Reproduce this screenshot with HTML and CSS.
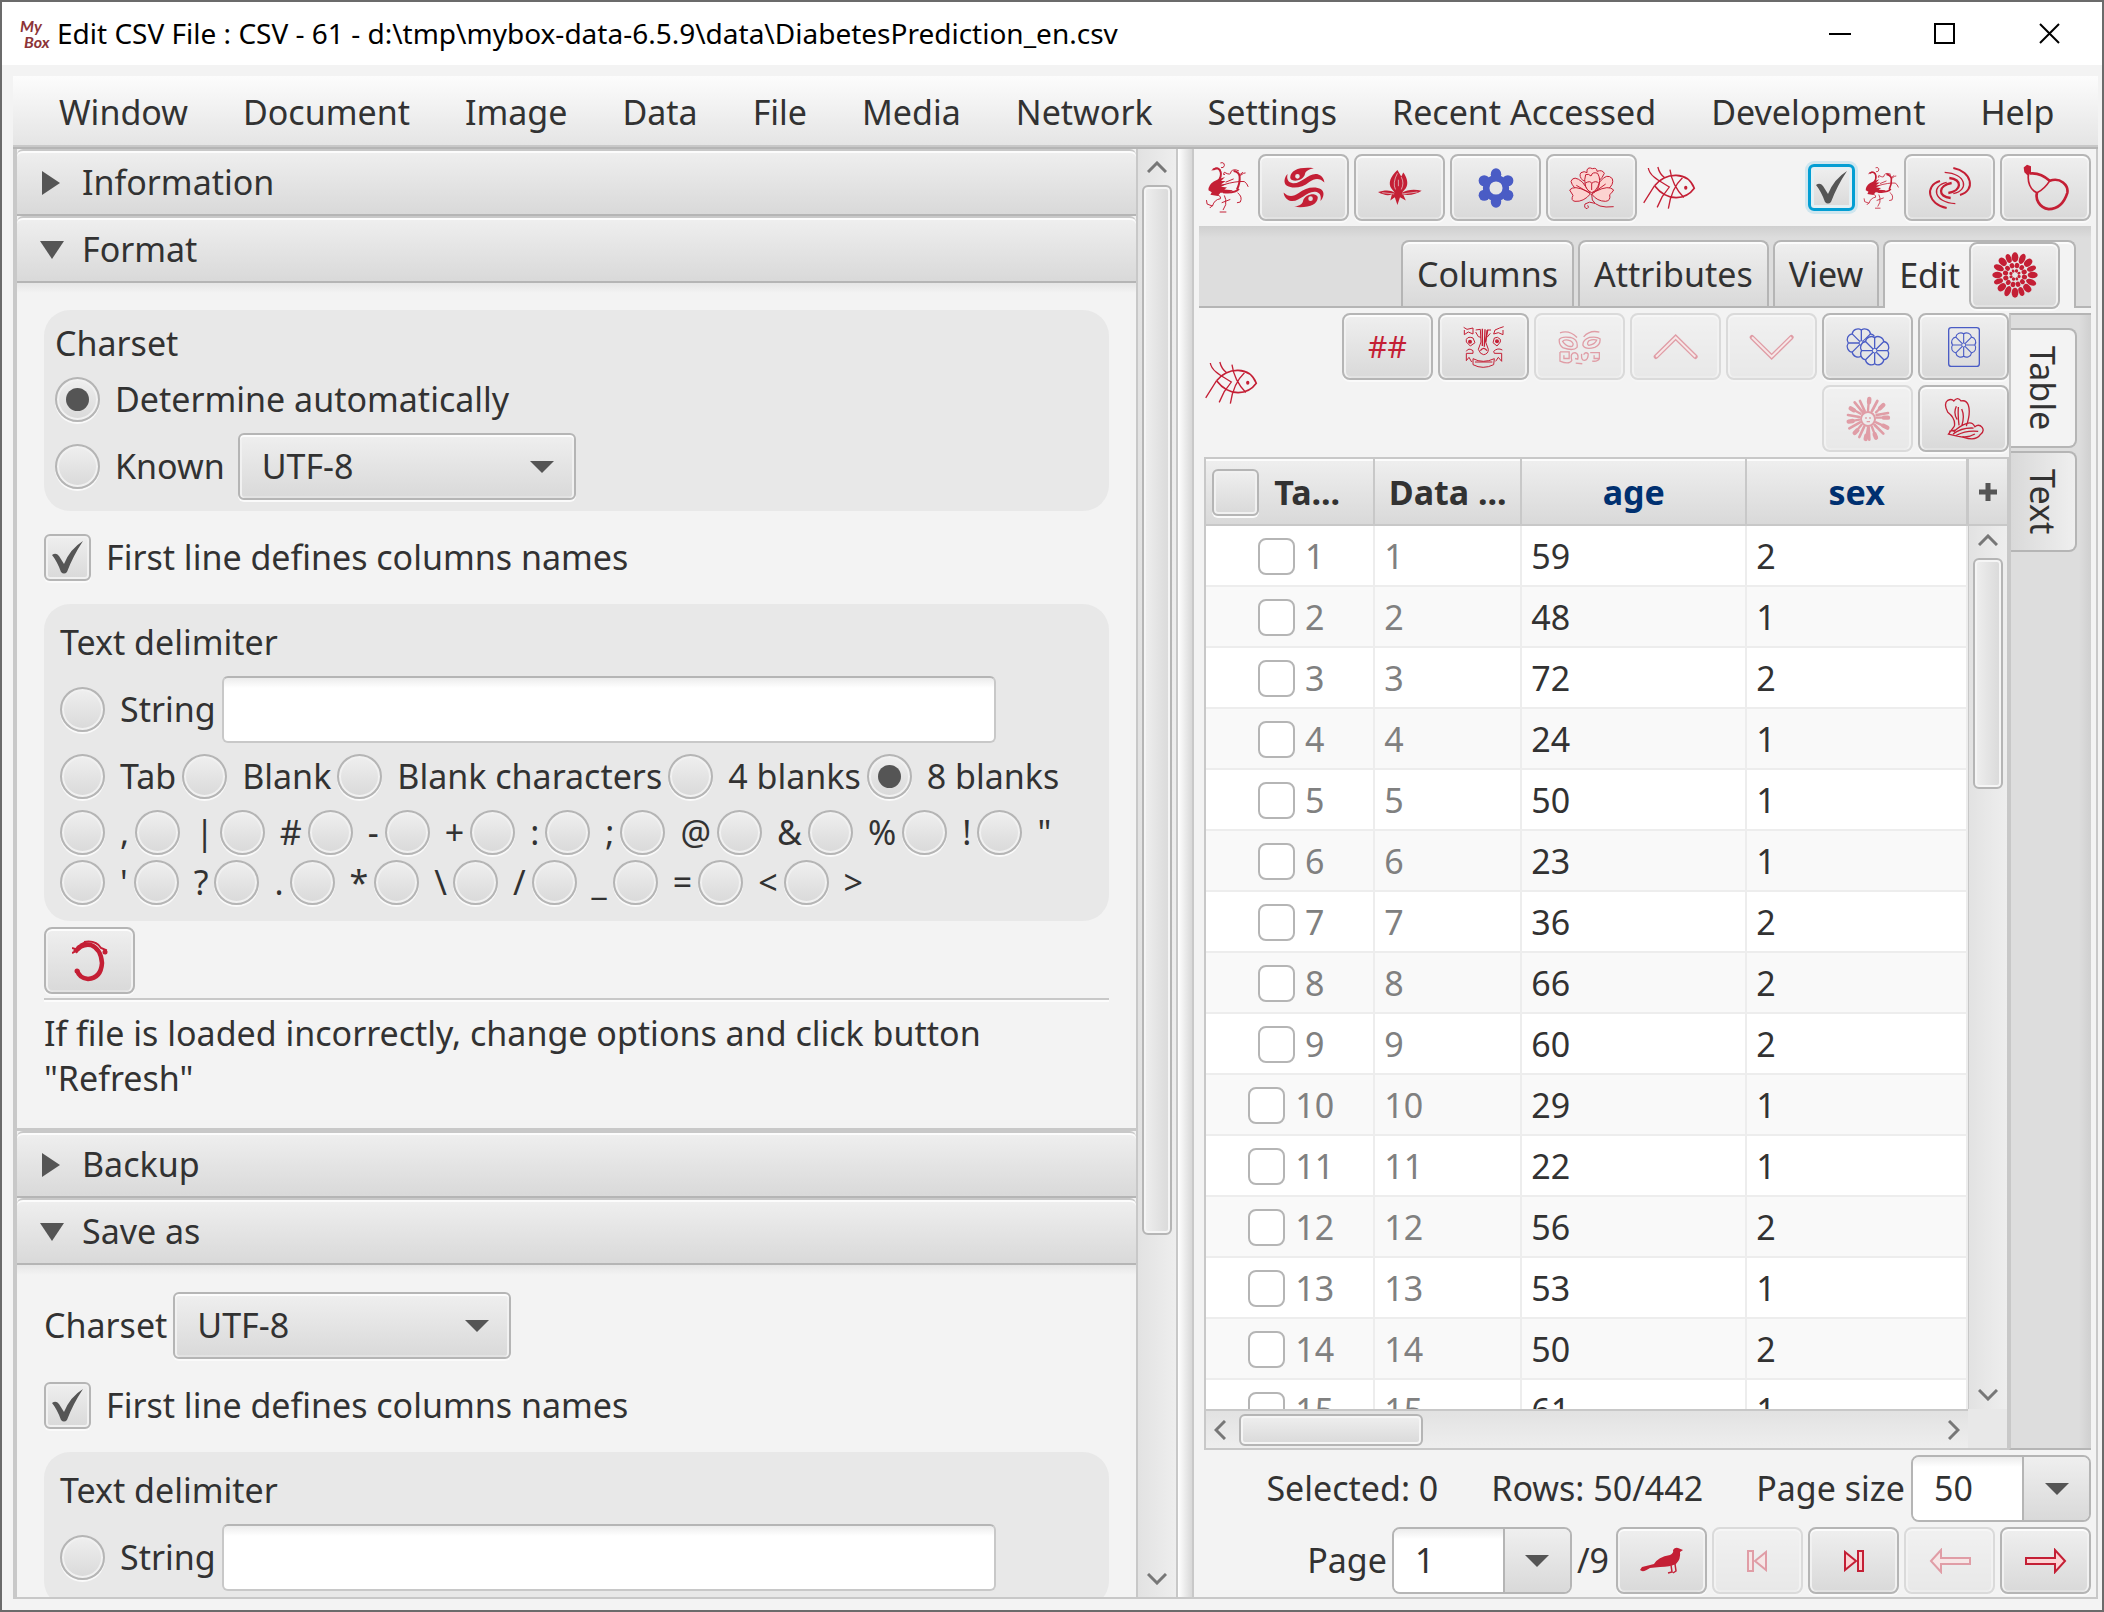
FILE: index.html
```
<!DOCTYPE html>
<html lang="en">
<head>
<meta charset="utf-8">
<title>Edit CSV File</title>
<link rel="stylesheet" href="styles.css">
</head>
<body>
<svg class="defs" aria-hidden="true">
  <symbol id="bird" viewBox="46 64 132 160">
    <g fill="none" stroke="currentColor" stroke-width="3">
      <path d="M66 92L78 85Q92 84 93 96M92 70Q104 66 104 78Q102 86 94 84M106 104Q98 108 104 98Q124 110 124 96Q132 86 148 94M150 106L160 98M152 108Q164 98 168 100M100 136Q140 124 164 126Q172 130 176 142M144 160Q160 172 152 188L142 190M84 166Q96 172 92 178Q74 180 68 200L52 194L50 182M68 198L60 206M104 168L108 180Q112 196 100 212M90 218H110M96 190L122 180M108 128L132 118"/>
      <path stroke-width="6" d="M70 90Q88 80 93 98Q96 110 86 124M100 158Q136 162 148 148M132 94Q148 96 150 110Q152 130 142 150"/>
    </g>
    <path fill="currentColor" d="M84 120L106 112L94 124L108 124L94 134L110 134L94 142L112 144L104 150L130 152Q120 160 92 160L84 170L62 166L66 158L56 152Q56 136 72 126Z"/>
  </symbol>
  <symbol id="fish" viewBox="1358 82 162 134">
    <g fill="none" stroke="currentColor" stroke-width="4">
      <path stroke-width="5" d="M1395 142C1430 100 1496 98 1516 150C1490 186 1434 192 1395 142"/>
      <path d="M1362 194L1395 142M1376 88C1380 116 1420 132 1440 146L1418 176L1403 208M1405 85Q1410 106 1426 118M1442 93Q1448 140 1484 178M1480 118Q1446 150 1437 212"/>
    </g>
    <ellipse cx="1490" cy="148" rx="5" ry="6" fill="currentColor"/>
  </symbol>
  <symbol id="flower8" viewBox="-50 -50 100 100">
    <g fill="none" stroke="currentColor" stroke-width="4">
      <path d="M40 0A18 18 0 0 1 28 28A18 18 0 0 1 0 40A18 18 0 0 1 -28 28A18 18 0 0 1 -40 0A18 18 0 0 1 -28 -28A18 18 0 0 1 0 -40A18 18 0 0 1 28 -28A18 18 0 0 1 40 0Z"/>
      <path d="M0 -40V40M-40 0H40M-28 -28L28 28M28 -28L-28 28"/>
    </g>
    <circle r="7" fill="#e8e8e8" stroke="currentColor" stroke-width="3"/>
  </symbol>
</svg>

<div class="window">
  <header class="titlebar">
    <span class="logo"><i>My</i><i>Box</i></span>
    <h1>Edit CSV File : CSV - 61 - d:\tmp\mybox-data-6.5.9\data\DiabetesPrediction_en.csv</h1>
    <div class="caption">
      <button aria-label="Minimize"><svg width="22" height="22"><path d="M0 11H22" /></svg></button>
      <button aria-label="Maximize"><svg width="22" height="22"><path d="M1 1H20V20H1Z"/></svg></button>
      <button aria-label="Close"><svg width="22" height="22"><path d="M1 1L20 20M20 1L1 20"/></svg></button>
    </div>
  </header>

  <nav class="menubar">
    <button>Window</button><button>Document</button><button>Image</button><button>Data</button><button>File</button><button>Media</button><button>Network</button><button>Settings</button><button>Recent Accessed</button><button>Development</button><button>Help</button>
  </nav>

  <main class="split">
    <section class="options">
      <div class="accordion">
        <button class="acc-head"><span class="tri closed"></span>Information</button>
        <button class="acc-head"><span class="tri open"></span>Format</button>
        <div class="acc-body">
          <fieldset class="group charset">
            <legend>Charset</legend>
            <div class="row"><label class="opt"><input type="radio" name="charset" checked>Determine automatically</label></div>
            <div class="row known">
              <label class="opt"><input type="radio" name="charset">Known</label>
              <span class="combo"><select aria-label="Charset"><option>UTF-8</option></select></span>
            </div>
          </fieldset>
          <label class="opt check"><input type="checkbox" checked>First line defines columns names</label>
          <fieldset class="group delim">
            <legend>Text delimiter</legend>
            <div class="row"><label class="opt"><input type="radio" name="delim">String</label><input class="text" type="text" aria-label="Delimiter string"></div>
            <div class="row"><label class="opt"><input type="radio" name="delim">Tab</label><label class="opt"><input type="radio" name="delim">Blank</label><label class="opt"><input type="radio" name="delim">Blank characters</label><label class="opt"><input type="radio" name="delim">4 blanks</label><label class="opt"><input type="radio" name="delim" checked>8 blanks</label></div>
            <div class="signs">
              <div class="row"><label class="opt"><input type="radio" name="delim">,</label><label class="opt"><input type="radio" name="delim">|</label><label class="opt"><input type="radio" name="delim">#</label><label class="opt"><input type="radio" name="delim">-</label><label class="opt"><input type="radio" name="delim">+</label><label class="opt"><input type="radio" name="delim">:</label><label class="opt"><input type="radio" name="delim">;</label><label class="opt"><input type="radio" name="delim">@</label><label class="opt"><input type="radio" name="delim">&amp;</label><label class="opt"><input type="radio" name="delim">%</label><label class="opt"><input type="radio" name="delim">!</label><label class="opt"><input type="radio" name="delim">"</label></div>
              <div class="row"><label class="opt"><input type="radio" name="delim">'</label><label class="opt"><input type="radio" name="delim">?</label><label class="opt"><input type="radio" name="delim">.</label><label class="opt"><input type="radio" name="delim">*</label><label class="opt"><input type="radio" name="delim">\</label><label class="opt"><input type="radio" name="delim">/</label><label class="opt"><input type="radio" name="delim">_</label><label class="opt"><input type="radio" name="delim">=</label><label class="opt"><input type="radio" name="delim">&lt;</label><label class="opt"><input type="radio" name="delim">&gt;</label></div>
            </div>
          </fieldset>
          <button class="btn refresh" aria-label="Refresh">
            <svg width="36" height="42" viewBox="0 0 36 42"><path fill="none" stroke="currentColor" stroke-width="4.500" d="M3 12Q10 3 19 5Q29 9 30 23Q29 38 16 39Q7 38 5 30"/><path fill="none" stroke="currentColor" stroke-width="2" d="M0 8L6 10L0 13M5 7L10 4M12 2Q24 0 29 8L34 10L33 14M8 5L14 2"/><circle cx="33" cy="12" r="2.500" fill="currentColor"/><circle cx="5" cy="31" r="2.500" fill="currentColor"/></svg>
          </button>
          <hr>
          <p class="hint">If file is loaded incorrectly, change options and click button "Refresh"</p>
        </div>
        <button class="acc-head"><span class="tri closed"></span>Backup</button>
        <button class="acc-head"><span class="tri open"></span>Save as</button>
        <div class="acc-body">
          <div class="row"><label for="save-charset">Charset</label><span class="combo"><select id="save-charset"><option>UTF-8</option></select></span></div>
          <label class="opt check"><input type="checkbox" checked>First line defines columns names</label>
          <fieldset class="group delim">
            <legend>Text delimiter</legend>
            <div class="row"><label class="opt"><input type="radio" name="save-delim">String</label><input class="text" type="text" aria-label="Delimiter string"></div>
          </fieldset>
        </div>
      </div>
      <div class="vbar">
        <svg width="20" height="12"><path d="M1 11L10 2L19 11"/></svg>
        <div class="track"><div class="thumb" style="height:76.3%"></div></div>
        <svg width="20" height="12"><path d="M1 1L10 10L19 1"/></svg>
      </div>
    </section>
    <div class="divider"></div>

    <section class="content">
      <div class="tools">
        <svg class="ico" width="44" height="53"><use href="#bird"/></svg>
        <button class="btn" aria-label="Flip"><svg width="42" height="43" viewBox="276 78 128 130"><g id="wave" fill="currentColor"><path fill-rule="evenodd" d="M298 112C300 90 325 80 370 84C352 88 344 94 343 102C340 116 322 124 308 122C302 120 298 118 298 112ZM313 109A7 7 0 1 0 327 109A7 7 0 1 0 313 109Z"/><path d="M290 102C286 118 292 128 306 130C334 132 352 98 380 102C396 106 402 120 402 128C388 114 374 114 356 126C336 144 306 148 288 138C276 130 280 112 290 102Z"/></g><use href="#wave" transform="rotate(180 340 143)"/></svg></button>
        <button class="btn" aria-label="Lotus"><svg width="44" height="37" viewBox="562 88 136 112"><path fill="currentColor" d="M622 90C600 110 592 132 604 148L614 160C600 150 580 152 562 158C580 168 594 170 605 165L600 184L614 174L622 198L630 174L648 184L640 166C660 170 682 164 697 154C675 148 652 150 636 160L648 146C658 132 650 110 640 98L634 110Z"/><path fill="none" stroke="#e6e6e6" stroke-width="2" d="M622 100Q606 130 616 150M634 112Q644 130 634 150M625 140V120M575 160L612 164M684 158L636 164"/></svg></button>
        <button class="btn blue" aria-label="Settings"><svg width="38" height="42" viewBox="858 82 116 124"><g fill="currentColor"><ellipse cx="916" cy="102" rx="16" ry="18"/><ellipse cx="916" cy="186" rx="16" ry="18"/><circle cx="880" cy="122" r="17"/><circle cx="952" cy="122" r="17"/><circle cx="880" cy="166" r="17"/><circle cx="952" cy="166" r="17"/></g><circle cx="916" cy="144" r="30" fill="#e6e6e6" stroke="currentColor" stroke-width="20"/></svg></button>
        <button class="btn" aria-label="Peony"><svg width="46" height="44" viewBox="1136 78 138 132"><g fill="#fcd3d0" stroke="currentColor" stroke-width="3"><path d="M1190 90Q1194 80 1206 86Q1220 82 1220 94Q1236 88 1242 100Q1236 114 1228 120L1178 122Q1164 108 1172 98Q1182 92 1190 98Z"/><path d="M1176 126Q1150 104 1142 124Q1146 142 1170 156L1200 160Z"/><path d="M1230 124Q1250 98 1266 116Q1272 134 1250 150L1206 160Z"/><path d="M1190 154Q1150 134 1138 150Q1144 160 1148 166Q1140 182 1154 184Q1180 186 1200 162Z"/><path d="M1216 154Q1256 134 1270 150Q1264 160 1258 164Q1262 182 1246 184Q1220 184 1204 162Z"/><path d="M1186 104Q1176 136 1200 156Q1214 156 1222 148Q1234 120 1222 100Q1206 94 1202 108Q1194 100 1186 104Z"/><path d="M1184 130Q1200 120 1204 130Q1216 120 1226 130Q1220 152 1204 158Q1186 150 1184 130Z"/></g><path fill="none" stroke="currentColor" stroke-width="3" d="M1158 136L1196 158M1246 132L1210 158M1204 130V150M1204 162L1206 180Q1220 206 1270 200M1214 190Q1196 182 1184 192Q1180 204 1190 206Q1198 202 1192 196"/></svg></button>
        <svg class="ico" width="54" height="44"><use href="#fish"/></svg>
        <span class="spacer"></span>
        <label class="opt focus"><input type="checkbox" checked aria-label="Show toolbar"></label>
        <svg class="ico" width="36" height="44"><use href="#bird"/></svg>
        <button class="btn" aria-label="Swirl"><svg width="44" height="42" viewBox="444 50 132 126"><g id="arc" fill="none" stroke="currentColor"><path stroke-width="7" d="M505 128C546 122 548 86 508 83"/><path stroke-width="4" d="M520 130C568 120 560 70 494 66"/><path stroke-width="6" d="M540 134C588 120 576 64 520 53"/></g><use href="#arc" transform="rotate(180 510 113)"/></svg></button>
        <button class="btn" aria-label="Gourd"><svg width="46" height="47" viewBox="728 42 138 140"><g fill="none" stroke="currentColor"><path stroke-width="5" d="M745 70C740 95 750 120 770 128C785 120 800 105 808 92"/><path stroke-width="8" d="M748 70Q780 66 808 92C840 80 865 105 861 128C854 150 838 176 805 177C775 172 765 145 770 128"/></g><path fill="currentColor" d="M730 52L740 44L752 48V68L742 76L732 66Z"/></svg></button>
      </div>

      <div class="tabs">
        <button>Columns</button><button>Attributes</button><button>View</button>
        <div class="tab on"><a href="#edit">Edit</a><span class="btn"><svg width="46" height="46" viewBox="-69 -69 138 138"><g fill="currentColor"><g id="m4"><ellipse cy="-53" rx="10" ry="15"/><ellipse cy="-53" rx="9" ry="16" transform="rotate(24)"/><ellipse cy="-54" rx="10" ry="14" transform="rotate(47)"/><ellipse cy="-53" rx="8" ry="14" transform="rotate(69)"/><ellipse cy="-29" rx="7" ry="8" transform="rotate(12)"/><ellipse cy="-30" rx="7" ry="8" transform="rotate(42)"/><ellipse cy="-29" rx="7" ry="8" transform="rotate(72)"/><ellipse cy="-13" rx="5" ry="5" transform="rotate(20)"/><ellipse cy="-13" rx="4" ry="5" transform="rotate(65)"/></g><use href="#m4" transform="rotate(90)"/><use href="#m4" transform="rotate(180)"/><use href="#m4" transform="rotate(270)"/></g></svg></span></div>
      </div>

      <div class="pane" id="edit">
        <div class="data">
          <div class="edit-tools">
            <svg class="ico" width="54" height="44"><use href="#fish"/></svg>
            <div class="wrap">
              <button class="btn hash">##</button>
              <button class="btn" aria-label="Select all"><svg width="42" height="44" viewBox="96 46 126 130"><g fill="none" stroke="currentColor" stroke-width="3"><path d="M98 52L108 58L126 54V72L112 66L100 74V60M218 50L206 54L192 60L188 72L202 68L216 74L216 60M134 60L148 58L150 96M180 60H168L164 96M134 66L142 80L150 82M178 70L168 82M106 88Q112 78 126 84L132 98L118 108L106 96ZM208 88Q200 78 190 84L186 98L198 108L208 96ZM106 124Q112 112 126 122V130H106V152L114 142L122 156M214 120Q200 112 188 124L190 130H212V154L202 142L194 154M126 146Q156 162 190 146L188 164Q156 180 126 164ZM132 156H184M150 96L142 118Q148 134 158 134Q172 132 172 118L164 96"/></g><circle cx="117" cy="95" r="6" fill="currentColor"/><circle cx="198" cy="94" r="6" fill="currentColor"/><path fill="none" stroke="currentColor" stroke-width="4" d="M154 56V108M162 58L160 110M170 60L164 96M148 122Q158 108 168 122"/></svg></button>
              <button class="btn" disabled aria-label="Select none"><svg width="44" height="36" viewBox="382 56 134 106"><g fill="none" stroke="currentColor" stroke-width="4"><path d="M388 66Q416 56 440 80M508 64Q480 56 460 78M386 86Q392 76 420 80Q444 86 440 110Q430 122 398 112Q384 102 386 86ZM510 84Q500 76 478 80Q456 88 458 104Q466 118 494 110Q512 102 510 84ZM396 92Q402 84 420 90Q432 98 426 106Q410 112 396 92ZM500 88Q490 84 476 90Q468 100 476 104Q494 102 500 88ZM388 124H416V144H400V134M388 124V152Q416 164 424 150Q418 126 434 126Q446 130 442 146L434 144M436 158L456 160M454 130Q452 150 462 150Q474 148 474 130Q466 122 460 132M480 126H508V144H492V134M508 144Q504 154 486 152"/></g></svg></button>
              <button class="btn" disabled aria-label="Move up"><svg width="46" height="26" viewBox="670 70 138 78"><path fill="none" stroke="currentColor" stroke-width="14" stroke-linecap="round" d="M679 138L738 80L797 138"/><path fill="none" stroke="#fbd5d6" stroke-width="6" d="M679 138L738 80L797 138"/></svg></button>
              <button class="btn" disabled aria-label="Move down"><svg width="46" height="26" viewBox="670 70 138 78"><path fill="none" stroke="currentColor" stroke-width="14" stroke-linecap="round" d="M679 80L738 138L797 80"/><path fill="none" stroke="#fbd5d6" stroke-width="6" d="M679 80L738 138L797 80"/></svg></button>
              <button class="btn blue" aria-label="Copy"><svg width="46" height="40" viewBox="104 54 138 120"><use href="#flower8" x="104" y="53" width="98" height="98"/><circle cx="193" cy="125" r="43" fill="#e6e6e6"/><use href="#flower8" x="144" y="76" width="98" height="98"/></svg></button>
              <button class="btn blue" aria-label="Paste"><svg width="34" height="42" viewBox="411 45 102 126"><rect x="416" y="50" width="92" height="116" rx="8" fill="none" stroke="currentColor" stroke-width="4"/><use href="#flower8" x="419" y="60" width="84" height="84"/></svg></button>
              <button class="btn" disabled aria-label="Clear"><svg width="46" height="46" viewBox="-69 -69 138 138"><g fill="none" stroke="currentColor" stroke-linecap="round"><path stroke-width="13" d="M3 -50L4 -60M36 -32L46 -42M-5 50L-7 60M-46 6L-58 8M46 20L58 26M20 46L24 56M-42 -26L-52 -32M48 -4H60M-32 34L-40 42"/><path stroke-width="7" d="M0 -25L3 -62M24 -20L46 -42M0 26L-6 60M-26 2L-58 8M24 10L58 26M12 24L24 56M-22 -16L-52 -32M26 -4H60M-20 18L-40 42"/><path stroke-width="8" d="M-10 -24L-24 -54M12 -24L28 -54M-14 -18L-40 -50M26 -12L60 -18M-24 10L-56 28M20 18L46 44M2 26L4 62M-12 24L-26 54M-26 -6L-60 -12"/><circle r="21" stroke-width="6"/></g><path fill="none" stroke="currentColor" stroke-width="4" d="M-6 -6V0M6 -6V0M-4 8H6"/></svg></button>
              <button class="btn" aria-label="Delete"><svg width="40" height="43" viewBox="403 262 120 130"><path fill="none" stroke="currentColor" stroke-width="4" d="M434 350Q438 326 414 308Q400 282 414 272Q426 266 432 274Q444 260 454 274Q470 270 476 286Q484 310 470 350M446 292Q444 320 448 348M456 298Q466 320 456 350M440 290Q430 310 442 330M434 350L416 374Q440 380 462 384Q500 396 512 376Q526 366 518 354Q508 342 496 352Q488 336 472 342Q448 350 432 368M430 374Q456 354 492 356M440 378Q470 362 506 366M418 366L436 362M458 382Q480 384 496 374"/></svg></button>
            </div>
          </div>
          <div class="grid">
            <div class="cells">
              <table>
                <colgroup><col class="c1"><col class="c2"><col class="c3"><col></colgroup>
                <thead><tr><th><span class="cell"><input type="checkbox" aria-label="Select all rows">Ta...</span></th><th>Data ...</th><th class="key">age</th><th class="key">sex</th></tr></thead>
                <tbody>
                  <tr><td><label><input type="checkbox">1</label></td><td>1</td><td>59</td><td>2</td></tr>
                  <tr><td><label><input type="checkbox">2</label></td><td>2</td><td>48</td><td>1</td></tr>
                  <tr><td><label><input type="checkbox">3</label></td><td>3</td><td>72</td><td>2</td></tr>
                  <tr><td><label><input type="checkbox">4</label></td><td>4</td><td>24</td><td>1</td></tr>
                  <tr><td><label><input type="checkbox">5</label></td><td>5</td><td>50</td><td>1</td></tr>
                  <tr><td><label><input type="checkbox">6</label></td><td>6</td><td>23</td><td>1</td></tr>
                  <tr><td><label><input type="checkbox">7</label></td><td>7</td><td>36</td><td>2</td></tr>
                  <tr><td><label><input type="checkbox">8</label></td><td>8</td><td>66</td><td>2</td></tr>
                  <tr><td><label><input type="checkbox">9</label></td><td>9</td><td>60</td><td>2</td></tr>
                  <tr><td><label><input type="checkbox">10</label></td><td>10</td><td>29</td><td>1</td></tr>
                  <tr><td><label><input type="checkbox">11</label></td><td>11</td><td>22</td><td>1</td></tr>
                  <tr><td><label><input type="checkbox">12</label></td><td>12</td><td>56</td><td>2</td></tr>
                  <tr><td><label><input type="checkbox">13</label></td><td>13</td><td>53</td><td>1</td></tr>
                  <tr><td><label><input type="checkbox">14</label></td><td>14</td><td>50</td><td>2</td></tr>
                  <tr><td><label><input type="checkbox">15</label></td><td>15</td><td>61</td><td>1</td></tr>
                </tbody>
              </table>
            </div>
            <div class="side">
              <button class="plus" aria-label="Choose columns"><svg width="18" height="18"><path d="M9 0V18M0 9H18"/></svg></button>
              <div class="vbar">
                <svg width="20" height="12"><path d="M1 11L10 2L19 11"/></svg>
                <div class="track"><div class="thumb" style="height:28.2%"></div></div>
                <svg width="20" height="12"><path d="M1 1L10 10L19 1"/></svg>
              </div>
            </div>
            <div class="hbar">
              <svg width="12" height="20"><path d="M11 1L2 10L11 19"/></svg>
              <div class="track"><div class="thumb" style="width:26.4%"></div></div>
              <svg width="12" height="20"><path d="M1 1L10 10L1 19"/></svg>
            </div>
            <div class="corner"></div>
          </div>
        </div>
        <div class="sidetabs"><button class="on">Table</button><button>Text</button></div>
      </div>

      <div class="foot status">
        <span>Selected: 0</span><span>Rows: 50/442</span>
        <span class="pair"><label for="size">Page size</label><span class="editable"><input id="size" type="text" value="50"><button aria-label="Open"></button></span></span>
      </div>
      <div class="foot">
        <label for="page">Page</label><span class="editable"><input id="page" type="text" value="1"><button aria-label="Open"></button></span><span class="total">/9</span>
        <button class="btn" aria-label="Go"><svg width="44" height="27" viewBox="0 0 44 27"><path fill="currentColor" d="M0 23L2 20L14 17Q18 10 30 8Q34 6 33 3Q35 0 38 1L43 3L40 5Q41 12 36 17Q30 20 20 20L10 21Q3 26 0 23Z"/><path fill="none" stroke="currentColor" stroke-width="1.500" d="M31 18L32 25L28 26M35 17L36 24L33 26"/></svg></button>
        <button class="btn" disabled aria-label="First page"><svg class="line" width="21" height="22" viewBox="0 0 21 22"><path d="M1 1H6V21H1ZM19 2V20L8 11Z"/></svg></button>
        <button class="btn" aria-label="Last page"><svg class="line" width="21" height="22" viewBox="0 0 21 22"><path d="M20 1H15V21H20ZM2 2V20L13 11Z"/></svg></button>
        <button class="btn" disabled aria-label="Previous page"><svg class="line" width="42" height="26" viewBox="0 0 42 26"><path d="M2 13L12 2V10H41V16H12V24Z"/></svg></button>
        <button class="btn" aria-label="Next page"><svg class="line" width="42" height="26" viewBox="0 0 42 26"><path d="M40 13L30 2V10H1V16H30V24Z"/></svg></button>
      </div>
    </section>
  </main>
</div>
</body>
</html>
```
FILE: styles.css
```
* { box-sizing: border-box; }
:root {
  --ink: #323232;
  --line: #b5b5b5;
  --soft: #c8c8c8;
  --bg: #f3f3f3;
  --face: linear-gradient(#efefef, #d9d9d9);
  --red: #c41f35;
  --bevel: inset 0 2px 0 #fcfcfc, inset 2px 0 0 #f1f1f1, inset -2px 0 0 #f1f1f1, inset 0 -2px 0 #e2e2e2, 0 2px 0 #fafafa;
}
body { margin: 0; background: var(--bg); color: var(--ink); font: 34px/45px "Noto Sans", "Open Sans", sans-serif; }
button, input, select { font: inherit; color: inherit; margin: 0; }
button { border: 0; background: none; padding: 0; }
a { color: inherit; text-decoration: none; }
.defs { display: none; }

.window { height: 100vh; display: flex; flex-direction: column; border: 2px solid #6b6b6b; overflow: hidden; }
.titlebar { height: 63px; flex: none; display: flex; align-items: center; background: #fff; color: #000; padding-left: 18px; }
.titlebar h1 { margin: 0; font-size: 28px; font-weight: 400; flex: 1; white-space: nowrap; }
.logo { width: 37px; display: flex; flex-direction: column; color: #8c3438; font: italic 700 16px/16px Lato, sans-serif; }
.logo i + i { padding-left: 4px; }
.caption { display: flex; }
.caption button { width: 105px; height: 61px; display: grid; place-items: center; }
.caption path { fill: none; stroke: #000; stroke-width: 2; }

.menubar { flex: none; height: 73px; margin: 11px 4px 0 11px; padding: 2px 0 0 46px; display: flex; align-items: center; gap: 55px; background: linear-gradient(#fcfcfc, #e4e4e4); border-bottom: 2px solid var(--line); box-shadow: inset 0 -2px 0 var(--soft); white-space: nowrap; }

.split { flex: 1; min-height: 0; margin: 0 4px 11px 11px; display: grid; grid-template-columns: minmax(0, 1.29fr) 18px minmax(0, 1fr); border: solid var(--soft); border-width: 0 2px 2px 0; }
.options { display: flex; min-height: 0; border-left: 4px solid var(--soft); }
.accordion { flex: 1; min-width: 0; overflow: hidden; border-right: 2px solid var(--soft); }
.acc-head { width: 100%; height: 67px; display: flex; align-items: center; padding-left: 25px; text-align: left; background: var(--face); border: solid; border-width: 2px 0; border-color: var(--soft) transparent var(--line); border-radius: 6px 6px 0 0; background-clip: padding-box; box-shadow: inset 0 2px 0 #fcfcfc; }
.tri { width: 40px; height: 24px; display: flex; align-items: center; }
.tri::before { content: ""; border: 0 solid transparent; }
.closed::before { border-width: 12px 0 12px 18px; border-left-color: #555; }
.open::before { border-width: 18px 12px 0; border-top-color: #555; margin-left: -2px; }
.acc-body { padding: 27px 27px 28px; border-bottom: 3px solid var(--soft); background: linear-gradient(#e6e6e6, var(--bg) 10px); }

.group { margin: 0; border: 0; min-width: 0; border-radius: 26px; background: #e8e8e8; display: flex; flex-direction: column; gap: 11px; }
.group legend { float: left; padding: 0; }
.charset { padding: 11px; }
.delim { padding: 16px; }
.row { display: flex; align-items: center; gap: 6px; white-space: nowrap; }
.known { gap: 13px; }
.signs { display: flex; flex-direction: column; gap: 5px; }
.opt { display: flex; align-items: center; gap: 15px; }
.check { margin: 23px 0; }

input[type=radio], input[type=checkbox] { appearance: none; flex: none; display: grid; place-items: center; border: 2px solid var(--line); background: var(--face); box-shadow: inset 0 0 0 2px #f1f1f1, 0 2px 0 #fafafa; }
input[type=radio] { width: 45px; height: 45px; border-radius: 50%; }
input[type=radio]:checked::before { content: ""; width: 23px; height: 23px; border-radius: 50%; background: #555; }
input[type=checkbox] { width: 47px; height: 47px; border-radius: 6px; }
input[type=checkbox]:checked::before { content: ""; width: 31px; height: 33px; background: #555; clip-path: path("M0 14Q4 11 7 15L12 23Q18 8 31 0Q21 15 15 31Q12 34 9 31Q5 20 0 14Z"); }
.focus input { border: 3px solid #039ed3; box-shadow: 0 0 0 3px #cfe6ef, inset 0 0 0 3px #e4f0f4; }

.combo { position: relative; }
.combo select { appearance: none; width: 338px; height: 67px; padding: 0 22px; border: 2px solid var(--line); border-radius: 6px; background: var(--face); box-shadow: var(--bevel); }
.combo::after { content: ""; position: absolute; right: 22px; top: 28px; border: 12px solid transparent; border-top-color: #555; border-bottom: 0; pointer-events: none; }
.text { flex: 0 1 774px; min-width: 0; height: 67px; border: 2px solid var(--soft); border-top-color: var(--line); border-radius: 6px; background: linear-gradient(#ececec, #fff 10px); }

.btn { flex: none; width: 91px; height: 67px; display: inline-grid; place-items: center; border: 2px solid var(--line); border-radius: 8px; background: var(--face); box-shadow: var(--bevel); color: var(--red); }
.btn:disabled { opacity: .4; }
.btn.blue { color: #4a5cc5; }
.hash { font-size: 30px; }
.line path { fill: #fcd3d4; stroke: currentColor; stroke-width: 2; }
.refresh { margin: 6px 0 4px; display: grid; }
hr { margin: 0 0 9px; border: 0; height: 4px; background: linear-gradient(var(--soft) 50%, #fcfcfc 50%); }
.hint { margin: 0 0 -1px; }

.vbar, .hbar { display: flex; align-items: center; gap: 12px; background: #e8e8e8; }
.vbar { flex-direction: column; flex: none; width: 38px; padding: 12px 0; background: linear-gradient(90deg, #e2e2e2, #eee); }
.vbar svg path, .hbar svg path { fill: none; stroke: #777; stroke-width: 3; }
.vbar svg, .hbar svg { flex: none; }
.track { flex: 1; min-height: 0; min-width: 0; }
.vbar .track { width: 30px; }
.thumb { border: 2px solid var(--line); border-radius: 6px; background: linear-gradient(90deg, #efefef, #d9d9d9); box-shadow: inset 0 0 0 2px #f5f5f5; }
.divider { border: solid var(--soft); border-width: 0 2px; background: linear-gradient(90deg, #fff, #d8d8d8); }

.content { min-width: 0; min-height: 0; display: flex; flex-direction: column; padding: 5px 5px 3px; }
.ico { color: var(--red); flex: none; }
.tools { display: flex; align-items: center; gap: 5px; padding-left: 6px; }
.spacer { flex: 1; }
.tools .ico:first-child { margin-right: 4px; }
.tools .focus { margin-right: 3px; }
.tabs { height: 82px; flex: none; margin-top: 5px; padding: 14px 15px 0; display: flex; justify-content: flex-end; gap: 4px; background: linear-gradient(#cfcfcf, #ddd 12px); border-bottom: 2px solid var(--line); }
.tabs > * { border: 2px solid var(--line); border-bottom: 0; border-radius: 8px 8px 0 0; padding: 0 14px; background: var(--face); box-shadow: inset 0 2px 0 #fcfcfc; }
.tabs .tab { display: flex; align-items: center; gap: 9px; background: var(--bg); margin-bottom: -2px; }

.pane { flex: 1; min-height: 0; margin: 5px 0 0 5px; display: flex; }
.data { flex: 1; min-width: 0; display: flex; flex-direction: column; }
.edit-tools { display: flex; align-items: center; gap: 5px; }
.wrap { flex: 1; display: flex; flex-wrap: wrap; justify-content: flex-end; gap: 5px; }
.grid { flex: 1; min-height: 0; margin-top: 5px; display: grid; grid-template: minmax(0, 1fr) 39px / minmax(0, 1fr) 39px; border: 2px solid var(--soft); }
.cells { overflow: hidden; background: #fff; }
table { width: 100%; table-layout: fixed; border-collapse: separate; border-spacing: 0; }
.c1 { width: 169px; }
.c2 { width: 147px; }
.c3 { width: 225px; }
th { height: 67px; padding: 2px 0 0; border: solid var(--soft); border-width: 0 2px 2px 0; background: var(--face); box-shadow: inset 0 2px 0 #fcfcfc; }
.key { color: #003070; }
.cell { display: flex; align-items: center; gap: 15px; padding-left: 6px; }
td { height: 61px; padding: 2px 0 0 9px; border: solid #ededed; border-width: 0 2px 2px 0; }
tbody tr:nth-child(even) { background: #f9f9f9; }
td:nth-child(-n+2) { color: #808080; }
td:first-child { padding: 1px 0 0 3px; }
td label { display: flex; justify-content: center; align-items: center; gap: 10px; }
td input[type=checkbox] { width: 37px; height: 37px; border-radius: 8px; background: #fff; box-shadow: none; }
.side { display: flex; flex-direction: column; border-left: 1px solid var(--soft); min-height: 0; }
.side .vbar { flex: 1; padding: 8px 0; }
.plus { height: 67px; flex: none; display: grid; place-items: center; background: var(--face); border-bottom: 2px solid var(--soft); }
.plus path { stroke: #555; stroke-width: 5; }
.hbar { border-top: 2px solid var(--soft); padding: 0 8px; gap: 13px; background: linear-gradient(#e2e2e2, #eee); }
.hbar .thumb { height: 32px; background: var(--face); }
.corner { background: #e8e8e8; }
.sidetabs { width: 82px; flex: none; padding: 13px 14px 0 0; display: flex; flex-direction: column; gap: 3px; background: linear-gradient(270deg, #cfcfcf, #ddd 12px); border: solid var(--line); border-width: 2px 0; border-left: 2px solid var(--soft); }
.sidetabs button { writing-mode: vertical-rl; padding: 16px 10px; border: 2px solid var(--line); border-left: 0; border-radius: 0 8px 8px 0; background: linear-gradient(90deg, #d9d9d9, #efefef); }
.sidetabs .on { background: var(--bg); }

.foot { display: flex; flex: none; align-items: center; justify-content: flex-end; gap: 5px; margin-top: 5px; white-space: nowrap; }
.status { gap: 53px; }
.pair { display: flex; align-items: center; gap: 6px; }
.total { padding-right: 2px; }
.editable { display: flex; width: 180px; height: 67px; border: 2px solid var(--line); border-radius: 8px; overflow: hidden; }
.editable input { flex: 1; min-width: 0; border: 0; padding: 0 21px; background: linear-gradient(#ececec, #fff 10px); }
.editable button { width: 67px; display: grid; place-items: center; background: var(--face); border-left: 2px solid var(--line); }
.editable button::before { content: ""; border: 12px solid transparent; border-top-color: #555; border-bottom: 0; }
```
